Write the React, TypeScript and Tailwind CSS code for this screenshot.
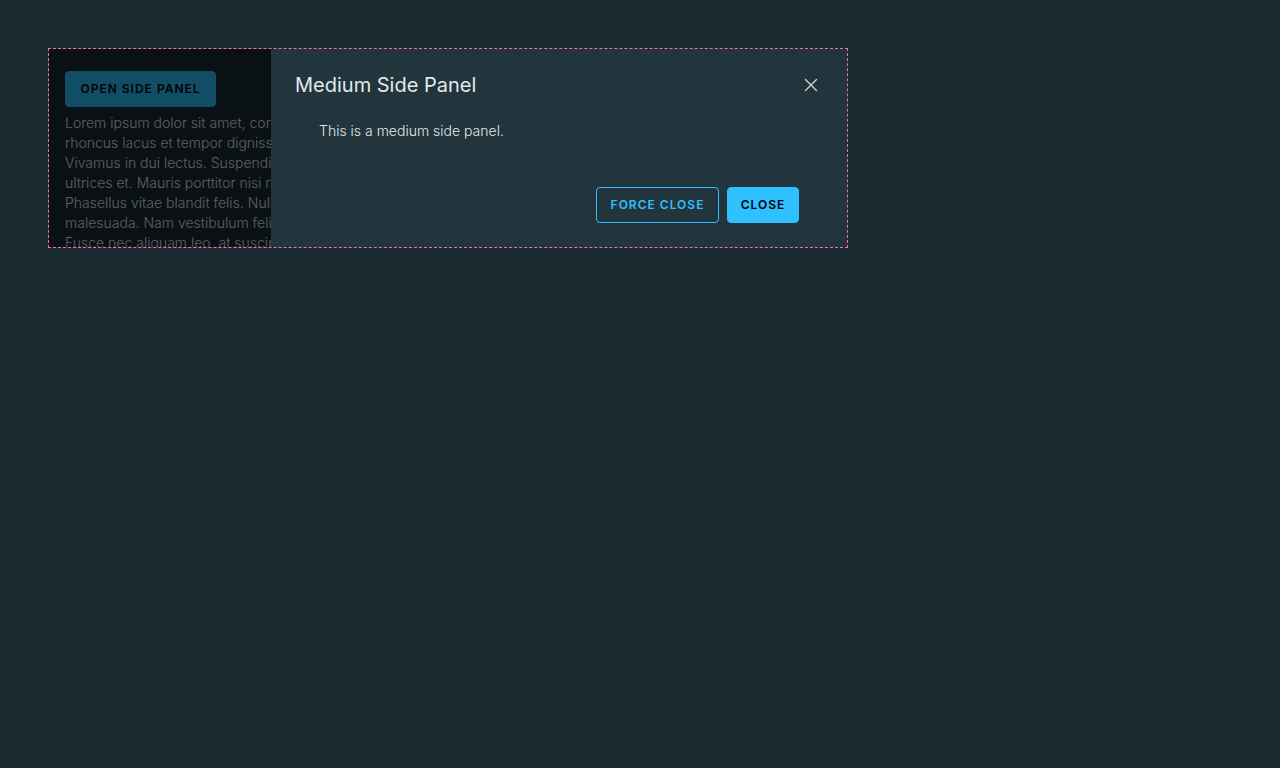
import { useState } from "react";

const LINES = [
  "Lorem ipsum dolor sit amet, consectetur",
  "rhoncus lacus et tempor dignissim.",
  "Vivamus in dui lectus. Suspendisse",
  "ultrices et. Mauris porttitor nisi nec",
  "Phasellus vitae blandit felis. Nulla",
  "malesuada. Nam vestibulum felis",
  "Fusce nec aliquam leo, at suscipit",
];

const buttonBase =
  "h-9 rounded-[4px] border px-3 text-xs font-semibold leading-4 tracking-[1px]";

export default function App() {
  const [open, setOpen] = useState(true);
  const close = () => setOpen(false);

  return (
    <main className="min-h-screen bg-[#1b2b32] p-12 font-['Inter','Liberation_Sans',sans-serif] text-sm text-[#e3e9ec]">
      <div className="relative h-[200px] w-full max-w-[800px] overflow-hidden border border-dashed border-[#ff69b4]">
        <div className="px-4 pt-[22px]">
          <button
            type="button"
            onClick={() => setOpen(true)}
            className={`${buttonBase} min-w-[151px] border-[#2ec0ff] bg-[#2ec0ff] text-black`}
          >
            OPEN SIDE PANEL
          </button>
          <p className="mt-1.5 whitespace-nowrap font-light leading-5">
            {LINES.map((line) => (
              <span key={line} className="block">
                {line}
              </span>
            ))}
          </p>
        </div>

        {open && (
          <>
            <div className="absolute inset-0 bg-black/60" />
            <section
              role="dialog"
              aria-labelledby="panel-title"
              className="absolute inset-y-0 right-0 flex w-[576px] max-w-full flex-col bg-[#22343c] p-6"
            >
              <header className="flex items-center justify-between">
                <h1 id="panel-title" className="text-xl font-normal leading-6">
                  Medium Side Panel
                </h1>
                <button type="button" aria-label="Close panel" onClick={close} className="p-1">
                  <svg viewBox="0 0 16 16" className="size-4" fill="none" stroke="#cbd4d8" strokeWidth="1.4" strokeLinecap="round">
                    <path d="M2.5 2.5 13.5 13.5M13.5 2.5 2.5 13.5" />
                  </svg>
                </button>
              </header>
              <div className="grow px-6 pt-6 font-light leading-5">This is a medium side panel.</div>
              <footer className="flex justify-end gap-2 px-6">
                <button
                  type="button"
                  onClick={close}
                  className={`${buttonBase} min-w-[123px] border-[#2ec0ff] text-[#2ec0ff]`}
                >
                  FORCE CLOSE
                </button>
                <button
                  type="button"
                  onClick={close}
                  className={`${buttonBase} min-w-[72px] border-[#2ec0ff] bg-[#2ec0ff] text-black`}
                >
                  CLOSE
                </button>
              </footer>
            </section>
          </>
        )}
      </div>
    </main>
  );
}
